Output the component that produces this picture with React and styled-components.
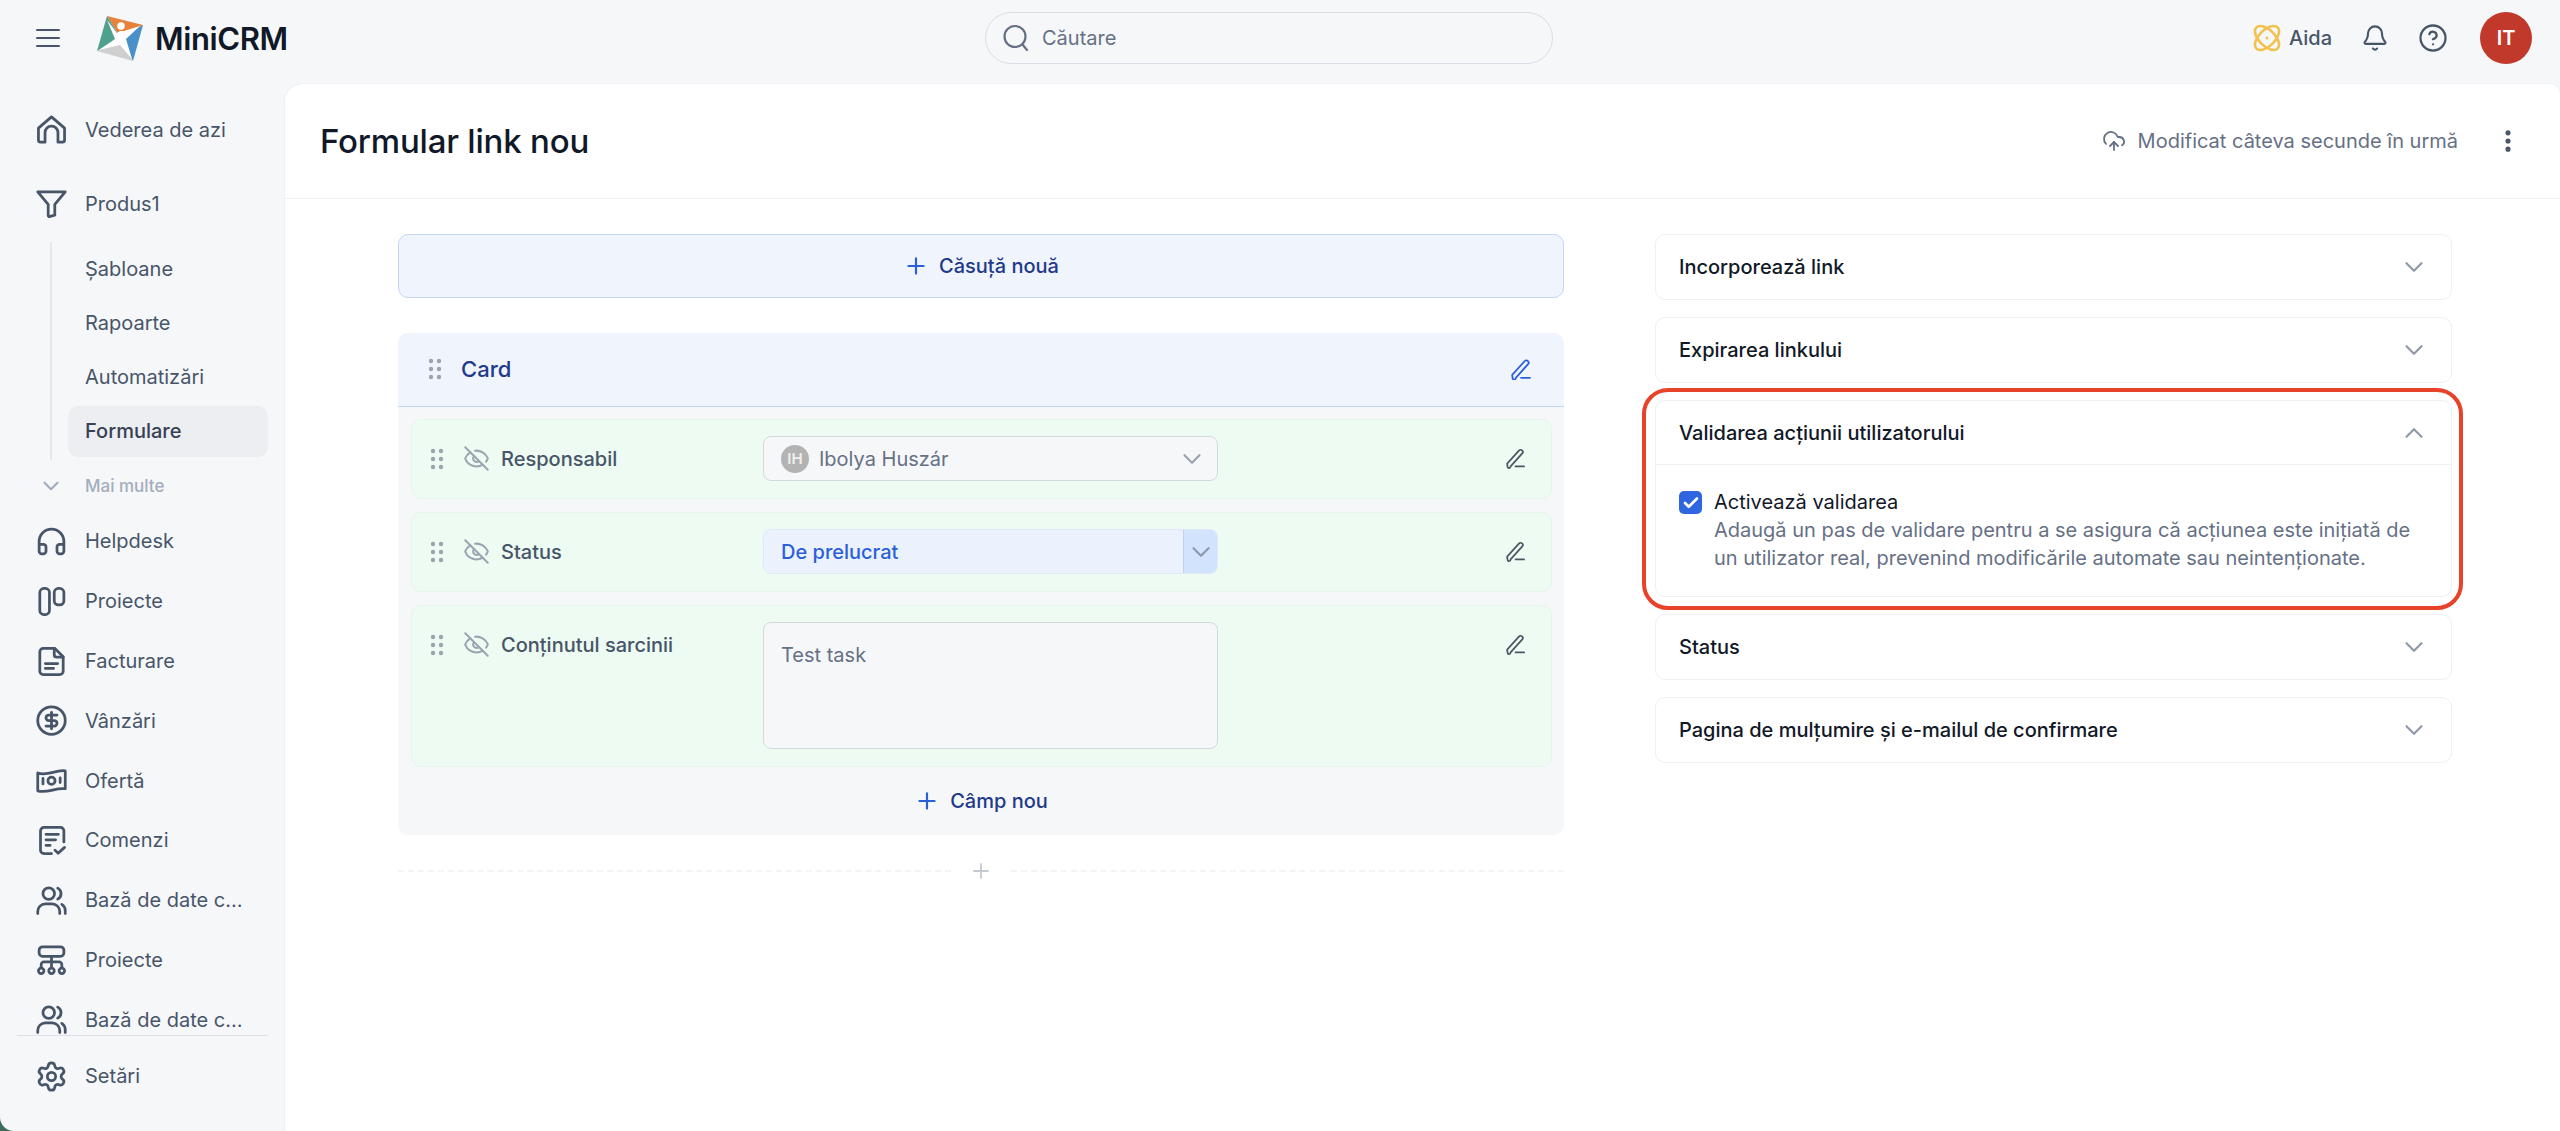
import React from 'react';
import styled, { createGlobalStyle } from 'styled-components';
import { Headphones, CircleDollarSign, Settings, EyeOff, CloudUpload, Bell, CircleHelp, Plus, ChevronDown, ChevronUp, Check, EllipsisVertical } from 'lucide-react';

const Global = createGlobalStyle`
  html, body { margin: 0; height: 100%; overflow: hidden; background: #3f6b5c; }
  * { box-sizing: border-box; }
  body { font-family: Inter, "Noto Sans", sans-serif; color: #111827; }
`;

const Shell = styled.div`
  width: 2560px; height: 1131px; background: #f6f7f9; border-bottom-left-radius: 14px;
  display: grid; grid-template-columns: 285px 1fr; grid-template-rows: 84px 1fr; overflow: hidden;
`;
const TopBar = styled.header`
  grid-column: 1 / 3; display: grid; grid-template-columns: 985px 568px 1fr; align-items: center; padding-bottom: 8px;
`;
const Brand = styled.div`display: flex; align-items: center; padding-left: 36px; color: #475569;`;
const BrandName = styled.span`
  font-size: 31px; font-weight: 600; letter-spacing: -0.4px; color: #111827; margin-left: 11px; line-height: 1;
`;
const Burger = styled.span`display: flex; margin-right: 36px;`;
const Search = styled.div`
  height: 52px; border: 1px solid #d9dde5; border-radius: 26px; display: flex; align-items: center;
  padding-left: 17px; gap: 13px; font-size: 20px; color: #667085;
`;
const TopActions = styled.div`display: flex; align-items: center; justify-content: flex-end; padding-right: 28px; color: #475569;`;
const Aida = styled.div`display: flex; align-items: center; gap: 8px; font-size: 20px; font-weight: 500; color: #475569; margin-right: 29px;`;
const IconSlot = styled.span`display: flex; margin-right: ${p => p.$mr}px;`;
const Avatar = styled.div`
  width: 52px; height: 52px; border-radius: 50%; background: #c0392b; color: #fff; font-weight: 600; font-size: 20px;
  display: flex; align-items: center; justify-content: center;
`;

const Sidebar = styled.aside`display: flex; flex-direction: column; height: 1047px; min-height: 0;`;
const NavScroll = styled.nav`height: 951px; overflow: hidden; padding: 16px 17px 0 35px; flex: none;`;
const NavItem = styled.div`
  height: ${p => p.$h || 59.8}px; margin-top: ${p => p.$mt || 0}px; display: flex; align-items: center; gap: 17px;
  font-size: 20px; color: #475569; white-space: nowrap;
  svg { flex: none; width: 33px; height: 33px; }
`;
const SubGroup = styled.div`
  margin: 8px 0 0 15px; border-left: 2px solid #e5e7eb; padding-left: 16px; height: 218px; display: flex; flex-direction: column;
`;
const SubItem = styled.div`
  height: ${p => p.$active ? 51 : 54}px; display: flex; align-items: center; padding-left: 17px;
  font-size: 20px; color: ${p => p.$active ? '#374151' : '#475569'}; font-weight: ${p => p.$active ? 500 : 400};
  background: ${p => p.$active ? '#eceef2' : 'transparent'}; border-radius: 10px;
  margin-top: ${p => p.$active ? 2 : 0}px;
`;
const More = styled.div`
  height: 36px; margin-top: 8px; display: flex; align-items: center; gap: 21px; padding-left: 3px;
  font-size: 17px; font-weight: 500; color: #a3adbd; 
`;
const SideFoot = styled.div`
  margin: 0 17px; border-top: 1px solid #dde0e6; padding: 10px 0 0 18px;
`;

const Main = styled.main`
  background: #fff; border-top-left-radius: 18px; border-top-right-radius: 10px; box-shadow: 0 0 0 1px #eef0f4;
  display: flex; flex-direction: column; min-width: 0;
`;
const MainHead = styled.div`
  height: 115px; flex: none; border-bottom: 1px solid #eef0f4; display: flex; align-items: center; padding: 0 38px 0 35px;
`;
const Title = styled.h1`margin: 0; font-size: 33px; font-weight: 500; color: #111827; letter-spacing: -0.2px; flex: 1;`;
const Saved = styled.div`display: flex; align-items: center; gap: 12px; font-size: 20px; color: #667085; margin-right: 36px;`;
const Dots = styled.span`display: flex; color: #475569;`;
const Body = styled.div`display: grid; grid-template-columns: 1166px 797px; column-gap: 91px; padding: 35px 0 0 113px;`;
const LeftCol = styled.div`display: flex; flex-direction: column;`;
const NewBox = styled.div`
  height: 64px; background: #f0f4fd; border: 1px solid #c5d6f5; border-radius: 10px; display: flex; align-items: center; justify-content: center;
  gap: 10px; font-size: 20px; font-weight: 500; color: #1e3a8a; svg { color: #2b5fd9; }
`;
const Card = styled.section`margin-top: 35px; height: 502px; background: #f6f7f9; border-radius: 10px; overflow: hidden;`;
const CardHead = styled.div`
  height: 74px; background: #f0f4fd; border-bottom: 1px solid #c5d6f5; display: flex; align-items: center; padding: 0 32px 1px 30px;
`;
const CardTitle = styled.div`font-size: 22px; font-weight: 500; color: #1e3a8a; margin-left: 19px; flex: 1;`;
const Rows = styled.div`padding: 12px 12px 0 13px; display: flex; flex-direction: column; gap: 13px;`;
const Row = styled.div`
  height: ${p => p.$h}px; background: #edfbf2; border: 1px solid #e6f5ec; border-radius: 10px;
  display: grid; grid-template-columns: 33px 38px 262px 455px 1fr 20px; padding: 16px 25px 0 18px; align-items: start;
`;
const Cell = styled.div`height: 45px; display: flex; align-items: center; color: ${p => p.$c || 'inherit'};`;
const FieldLabel = styled(Cell)`font-size: 20px; font-weight: 500; color: #475569;`;
const SelectBox = styled.div`
  height: 45px; display: flex; align-items: center; border: 1px solid #d3d8e0; border-radius: 8px; background: #f6f7f9; padding: 0 10px 0 17px;
  font-size: 20px; color: #667085; justify-content: space-between;
`;
const Who = styled.div`display: flex; align-items: center; gap: 10px;`;
const Initials = styled.span`
  width: 28px; height: 28px; border-radius: 50%; background: #b3b3b3; color: #f0f0f0; font-size: 15px; font-weight: 600;
  display: flex; align-items: center; justify-content: center;
`;
const StatusBox = styled.div`
  height: 45px; display: flex; align-items: stretch; justify-content: space-between; border: 1px solid #e0e9f8; border-radius: 8px; background: #ebf2fe; overflow: hidden;
  font-size: 20px; font-weight: 500; color: #2b5fd9;
`;
const StatusText = styled.span`display: flex; align-items: center; padding-left: 17px;`;
const StatusChevron = styled.span`
  width: 34px; background: #d1e3fd; border-left: 1px solid #bfd2ee; display: flex; align-items: center; justify-content: center; color: #8f98a8;
`;
const TextArea = styled.div`
  height: 127px; border: 1px solid #d3d8e0; border-radius: 8px; background: #f6f7f9; padding: 18px 17px; font-size: 20px; line-height: 28px; color: #667085;
`;
const AddField = styled.div`
  height: 68px; display: flex; align-items: center; justify-content: center; gap: 10px; font-size: 20px; font-weight: 500; color: #1e3a8a; svg { color: #2b5fd9; }
`;
const Divider = styled.div`
  margin-top: 21px; height: 30px; display: flex; align-items: center; gap: 18px; color: #c4c9d2;
  &::before, &::after { content: ""; flex: 1; border-top: 2px dashed #f3f4f6; }
`;
const RightCol = styled.div`display: flex; flex-direction: column; gap: 17px;`;
const Panel = styled.div`
  position: relative; border: 1px solid #eef0f4; border-radius: 10px; background: #fff;
`;
const PanelHead = styled.div`
  height: ${p => p.$h || 64}px; display: flex; align-items: center; justify-content: space-between; padding: 0 22px 0 23px;
  font-size: 20px; font-weight: 500; color: #111827; border-bottom: ${p => p.$open ? '1px solid #eef0f4' : 'none'};
  svg { color: #8f98a8; }
`;
const PanelBody = styled.div`display: flex; gap: 12px; padding: 23px 23px 24px;`;
const CheckMark = styled.span`
  width: 23px; height: 23px; flex: none; border-radius: 5px; background: #2f66e0; color: #fff; display: flex; align-items: center; justify-content: center; margin-top: 3px;
`;
const CheckLabel = styled.div`font-size: 20px; line-height: 28px; color: #111827;`;
const CheckHint = styled.div`font-size: 20px; line-height: 28px; color: #667085; width: 700px;`;
const Callout = styled.div`
  position: absolute; inset: -13px -12px -14px -14px; border: 4px solid #e8432a; border-radius: 26px; pointer-events: none;
`;

const stroke = { fill: 'none', stroke: 'currentColor', strokeWidth: 2, strokeLinecap: 'round', strokeLinejoin: 'round' };
const I = ({ children, s = 30, vb = '0 0 24 24' }) => <svg width={s} height={s} viewBox={vb} {...stroke}>{children}</svg>;

const BurgerI = () => <svg width="24" height="18" viewBox="0 0 24 18" fill="none" stroke="currentColor" strokeWidth="2" strokeLinecap="round"><path d="M1 1h22M1 9h22M1 17h22" /></svg>;
const HomeI = () => <I><path d="M2.5 11 12 2.8 21.5 11v8.6a1.6 1.6 0 0 1-1.6 1.6h-3.2v-7a4.7 4.7 0 0 0-9.4 0v7H4.1a1.6 1.6 0 0 1-1.6-1.6z" /></I>;
const FunnelI = () => <I><path d="M2 3.5h20l-7.6 9.2v7.8L10.5 21.5a.7.7 0 0 1-.9-.7v-8.1z" /></I>;
const ColumnsI = () => <I><rect x="3.5" y="2.5" width="7" height="19" rx="3" /><rect x="14" y="2.5" width="7" height="12" rx="3" /></I>;
const FileI = () => <I><path d="M6 2.5h8.5l6 6V19a2.5 2.5 0 0 1-2.5 2.5H6A2.5 2.5 0 0 1 3.500 19V5A2.500 2.500 0 0 1 6 2.500z" /><path d="M14 2.500V7a1.800 1.800 0 0 0 1.800 1.800h4.700M7.500 13.500h9M7.500 17h6" /></I>;
const MoneyI = () => <I><path d="M2 6.500c7 2.500 13-2.500 20-1.500v13c-7-1-13 3.500-20 1.500z" /><circle cx="12" cy="12.200" r="2.600" /><path d="M5.800 10.500v4M18.300 10v3.500" /></I>;
const OrderI = () => <I><path d="M21 13V5a2.500 2.500 0 0 0-2.500-2.500h-12A2.500 2.500 0 0 0 4 5v14a2.500 2.500 0 0 0 2.500 2.500H12" /><path d="M8 7.500h9M8 11.500h7M8 15.500h3M14.500 19l2.300 2.300L21.500 17" /></I>;
const UsersI = () => <I><circle cx="10" cy="7" r="4.200" /><path d="M2 21.500v-1.500a5.500 5.500 0 0 1 5.500-5.500h5a5.500 5.500 0 0 1 5.500 5.500v1.500M16.500 3a4.500 4.500 0 0 1 0 8M19.500 14.800A5.500 5.500 0 0 1 22 19.500v2" /></I>;
const TreeI = () => <I><rect x="3" y="2" width="18" height="7" rx="2.500" /><path d="M12 9v8M4.500 17v-2a2 2 0 0 1 2-2h11a2 2 0 0 1 2 2v2" /><circle cx="4.500" cy="19.500" r="2" /><circle cx="12" cy="19.500" r="2" /><circle cx="19.500" cy="19.500" r="2" /></I>;
const SearchI = () => <svg width="26" height="28" viewBox="0 0 26 28" fill="none" stroke="#667085" strokeWidth="2.200" strokeLinecap="round"><circle cx="12" cy="12.500" r="10.500" /><path d="M19.500 20.500l4.500 5.500" /></svg>;
const Drag = () => <svg width="14" height="22" viewBox="0 0 14 22" fill="#9ca3af"><circle cx="3" cy="3" r="2.200" /><circle cx="11" cy="3" r="2.200" /><circle cx="3" cy="11" r="2.200" /><circle cx="11" cy="11" r="2.200" /><circle cx="3" cy="19" r="2.200" /><circle cx="11" cy="19" r="2.200" /></svg>;
const Pencil = ({ c = '#4b5563' }) => <svg width="21" height="21" viewBox="0 0 21 21" fill="none" stroke={c} strokeWidth="1.800" strokeLinecap="round" strokeLinejoin="round"><path d="M1.200 15.800 13.800 2a2 2 0 0 1 3 0l.3.300a2 2 0 0 1 0 2.800L4.800 18.800a1.500 1.500 0 0 1-3.200.300z" /><path d="M10 18.800h9" /></svg>;
const Eye = () => <EyeOff size={27} color="#9ca3af" strokeWidth={1.800} />;

const Logo = () => (
  <svg width="48" height="47" viewBox="0 0 48 47">
    <polygon points="11,1 47,10 24,22" fill="#e8813a" />
    <polygon points="47,10 37,46 24,22" fill="#4a90c8" />
    <polygon points="1,36 37,46 24,22" fill="#cfcfcf" />
    <polygon points="11,1 1,36 24,22" fill="#4fa08c" />
    <path d="M11 5 L21 18 L24 16 L28 16 L44 11 L30 24 L36 44 L24 30 L3 35 L19 24 Z" fill="#fff" />
    <circle cx="25" cy="11" r="3.800" fill="#fff" />
  </svg>
);
const AidaMark = () => (
  <svg width="28" height="28" viewBox="0 0 28 28" fill="none" stroke="#f2c14e" strokeWidth="2.600">
    <ellipse cx="14" cy="14" rx="15" ry="8" transform="rotate(45 14 14)" />
    <ellipse cx="14" cy="14" rx="15" ry="8" transform="rotate(-45 14 14)" />
    <circle cx="14" cy="14" r="1.500" fill="#f2c14e" stroke="none" />
  </svg>
);

const nav = [
  ['Helpdesk', <Headphones strokeWidth={2} />],
  ['Proiecte', <ColumnsI />],
  ['Facturare', <FileI />],
  ['Vânzări', <CircleDollarSign strokeWidth={2} />],
  ['Ofertă', <MoneyI />],
  ['Comenzi', <OrderI />],
  ['Bază de date c...', <UsersI />],
  ['Proiecte', <TreeI />],
  ['Bază de date c...', <UsersI />],
];

const closed = ['Incorporează link', 'Expirarea linkului'];
const closedAfter = ['Status', 'Pagina de mulțumire și e-mailul de confirmare'];

export default function App() {
  return (
    <Shell>
      <Global />
      <TopBar>
        <Brand>
          <Burger><BurgerI /></Burger>
          <Logo />
          <BrandName>MiniCRM</BrandName>
        </Brand>
        <Search><SearchI />Căutare</Search>
        <TopActions>
          <Aida><AidaMark />Aida</Aida>
          <IconSlot $mr={29}><Bell size={28} strokeWidth={1.800} /></IconSlot>
          <IconSlot $mr={32}><CircleHelp size={30} strokeWidth={1.800} /></IconSlot>
          <Avatar>IT</Avatar>
        </TopActions>
      </TopBar>
      <Sidebar>
        <NavScroll>
          <NavItem><HomeI />Vederea de azi</NavItem>
          <NavItem $mt={14}><FunnelI />Produs1</NavItem>
          <SubGroup>
            <SubItem>Șabloane</SubItem>
            <SubItem>Rapoarte</SubItem>
            <SubItem>Automatizări</SubItem>
            <SubItem $active>Formulare</SubItem>
          </SubGroup>
          <More><ChevronDown size={26} strokeWidth={2} />Mai multe</More>
          {nav.map(([t, ic], i) => <NavItem key={i} $mt={i === 0 ? 8 : 0}>{ic}{t}</NavItem>)}
        </NavScroll>
        <SideFoot>
          <NavItem $h={60}><Settings strokeWidth={2} />Setări</NavItem>
        </SideFoot>
      </Sidebar>
      <Main>
        <MainHead>
          <Title>Formular link nou</Title>
          <Saved><CloudUpload size={24} strokeWidth={1.800} />Modificat câteva secunde în urmă</Saved>
          <Dots><EllipsisVertical size={28} strokeWidth={2.400} /></Dots>
        </MainHead>
        <Body>
          <LeftCol>
            <NewBox><Plus size={26} strokeWidth={2} />Căsuță nouă</NewBox>
            <Card>
              <CardHead>
                <Drag />
                <CardTitle>Card</CardTitle>
                <Pencil c="#2b5fd9" />
              </CardHead>
              <Rows>
                <Row $h={80}>
                  <Cell><Drag /></Cell><Cell><Eye /></Cell><FieldLabel>Responsabil</FieldLabel>
                  <SelectBox><Who><Initials>IH</Initials>Ibolya Huszár</Who><ChevronDown size={30} color="#9ca3af" strokeWidth={1.700} /></SelectBox>
                  <span /><Cell><Pencil /></Cell>
                </Row>
                <Row $h={80}>
                  <Cell><Drag /></Cell><Cell><Eye /></Cell><FieldLabel>Status</FieldLabel>
                  <StatusBox><StatusText>De prelucrat</StatusText><StatusChevron><ChevronDown size={30} strokeWidth={1.700} /></StatusChevron></StatusBox>
                  <span /><Cell><Pencil /></Cell>
                </Row>
                <Row $h={162}>
                  <Cell><Drag /></Cell><Cell><Eye /></Cell><FieldLabel>Conținutul sarcinii</FieldLabel>
                  <TextArea>Test task</TextArea>
                  <span /><Cell><Pencil /></Cell>
                </Row>
              </Rows>
              <AddField><Plus size={26} strokeWidth={2} />Câmp nou</AddField>
            </Card>
            <Divider><Plus size={24} strokeWidth={1.800} /></Divider>
          </LeftCol>
          <RightCol>
            {closed.map(t => <Panel key={t}><PanelHead>{t}<ChevronDown size={30} strokeWidth={1.700} /></PanelHead></Panel>)}
            <Panel>
              <PanelHead $open>Validarea acțiunii utilizatorului<ChevronUp size={30} strokeWidth={1.700} /></PanelHead>
              <PanelBody>
                <CheckMark><Check size={18} strokeWidth={3.500} /></CheckMark>
                <div>
                  <CheckLabel>Activează validarea</CheckLabel>
                  <CheckHint>Adaugă un pas de validare pentru a se asigura că acțiunea este inițiată de un utilizator real, prevenind modificările automate sau neintenționate.</CheckHint>
                </div>
              </PanelBody>
              <Callout />
            </Panel>
            {closedAfter.map(t => <Panel key={t}><PanelHead>{t}<ChevronDown size={30} strokeWidth={1.700} /></PanelHead></Panel>)}
          </RightCol>
        </Body>
      </Main>
    </Shell>
  );
}
